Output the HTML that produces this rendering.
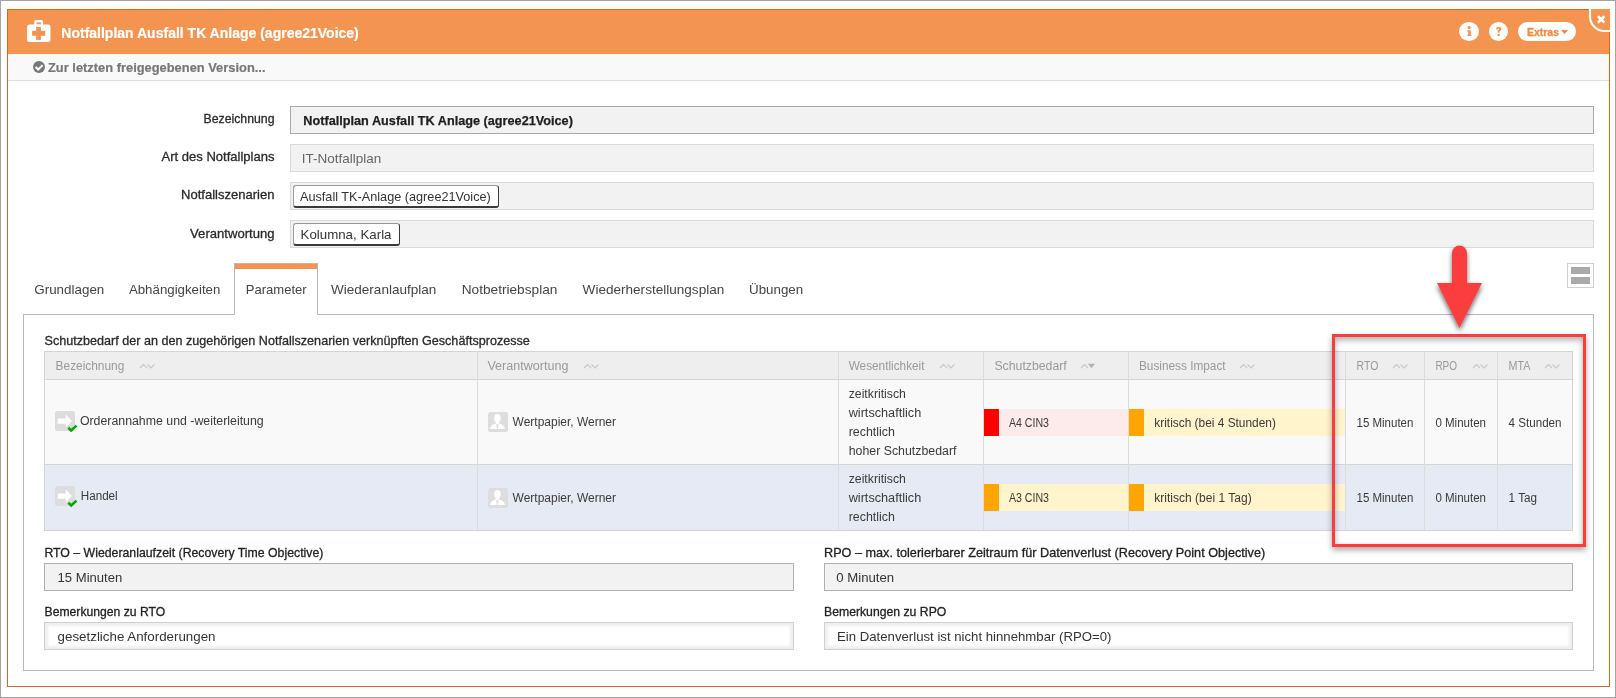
<!DOCTYPE html>
<html><head><meta charset="utf-8"><style>
html,body{margin:0;padding:0;width:1616px;height:698px;overflow:hidden;background:#fff}
body{position:relative;font-family:"Liberation Sans",sans-serif}
div{position:absolute}
svg text{font-family:"Liberation Sans",sans-serif}
</style></head><body>
<div style="left:0px;top:0px;width:1616px;height:698px;border:1px solid #a4a4a4;box-sizing:border-box;background:#fff"></div>
<div style="left:7px;top:9px;width:1603px;height:678px;border:1px solid #d9691a;box-sizing:border-box;background:#fff"></div>
<div style="left:7px;top:9px;width:1603px;height:45px;background:#f39550;border:1px solid #d9691a;border-bottom:none;box-sizing:border-box"></div>
<div style="left:8px;top:54px;width:1601px;height:26px;background:#f9f9f9;border-bottom:1px solid #dedede"></div>
<svg style="position:absolute;left:22px;top:16px" width="34" height="30" viewBox="0 0 34 30">
<rect x="12.25" y="4.1" width="8.8" height="6" rx="1.6" fill="#fff"/>
<rect x="14.6" y="6.4" width="4.3" height="2.1" fill="#f39550"/>
<rect x="5.07" y="8.6" width="23.4" height="17.4" rx="2.5" fill="#fff"/>
<rect x="14.2" y="11" width="4.7" height="12.9" fill="#f39550"/>
<rect x="10.1" y="14.8" width="13.1" height="5" fill="#f39550"/>
</svg>
<div style="left:1459px;top:22px;width:20px;height:19.3px;background:#fff;border-radius:50%"></div>
<div style="left:1489px;top:22px;width:19px;height:19.3px;background:#fff;border-radius:50%"></div>
<svg style="position:absolute;left:1459px;top:22px" width="20" height="20" viewBox="0 0 20 20">
<circle cx="10.1" cy="5.6" r="1.6" fill="#f39550"/>
<path d="M8.1 8.3 H11.8 V12.6 L12.8 13.9 H8 L9.1 12.6 V9.6 L8.1 9.6 Z" fill="#f39550"/>
</svg>
<svg style="position:absolute;left:1489px;top:22px" width="20" height="20" viewBox="0 0 20 20">
<path d="M7 7.2 C7.2 5.6 8.3 4.8 9.7 4.8 C11.3 4.8 12.4 5.7 12.4 7.1 C12.4 8.5 11.3 9 10.6 9.6 V10.8 H8.7 V9.2 C8.7 8.3 10.3 7.9 10.3 7.1 C10.3 6.7 10 6.5 9.6 6.5 C9.1 6.5 8.8 6.9 8.7 7.5 Z" fill="#f39550"/>
<rect x="8.5" y="12" width="2.3" height="2.1" fill="#f39550"/>
</svg>
<div style="left:1518px;top:22px;width:58px;height:19px;background:#fff;border-radius:10px"></div>
<svg style="position:absolute;left:1560px;top:29px" width="9" height="6" viewBox="0 0 9 6"><path d="M1 1 H8 L4.5 5 Z" fill="#f08a40"/></svg>
<svg style="position:absolute;left:1580px;top:0px" width="36" height="40" viewBox="1580 0 36 40">
<rect x="1610" y="1" width="5" height="39" fill="#fff"/>
<rect x="1580" y="1" width="35" height="8" fill="#fff"/>
<rect x="1589" y="9" width="21" height="24" fill="#f39550"/>
<path d="M1590 8 V16.5 A14.5 14.5 0 0 0 1604.5 31 H1611" stroke="#fff" stroke-width="2.1" fill="none"/>
<path d="M1598 16.2 L1604.4 22.6 M1604.4 16.2 L1598 22.6" stroke="#fff" stroke-width="2.7"/>
<rect x="1609" y="32" width="1" height="8" fill="#d9691a"/>
</svg>
<svg style="position:absolute;left:33px;top:61px" width="12" height="12" viewBox="0 0 12 12">
<circle cx="6" cy="6" r="6" fill="#777"/>
<path d="M2.5 5.9 L5.2 8.5 L9.6 4.3" stroke="#fff" stroke-width="2.1" fill="none"/>
</svg>
<div style="left:290px;top:106px;width:1304px;height:28px;background:#f2f2f2;border:1px solid #a9a9a9;box-sizing:border-box"></div>
<div style="left:290px;top:144px;width:1304px;height:28px;background:#f2f2f2;border:1px solid #d9d9d9;box-sizing:border-box"></div>
<div style="left:290px;top:182px;width:1304px;height:28px;background:#f2f2f2;border:1px solid #d9d9d9;box-sizing:border-box"></div>
<div style="left:293px;top:185px;width:206px;height:23px;background:#fff;border:1px solid #999;border-right-color:#3a3a3a;border-bottom:2px solid #3a3a3a;border-radius:3px;box-sizing:border-box"></div>
<div style="left:290px;top:220px;width:1304px;height:28px;background:#f2f2f2;border:1px solid #d9d9d9;box-sizing:border-box"></div>
<div style="left:293px;top:223px;width:107px;height:23px;background:#fff;border:1px solid #999;border-right-color:#3a3a3a;border-bottom:2px solid #3a3a3a;border-radius:3px;box-sizing:border-box"></div>
<div style="left:23px;top:314px;width:1571px;height:357px;border:1px solid #b9b9b9;box-sizing:border-box;background:#fff"></div>
<div style="left:234px;top:263px;width:84px;height:52px;border:1px solid #b9b9b9;border-bottom:none;background:#fff;box-sizing:border-box"></div>
<div style="left:235px;top:264px;width:82px;height:5px;background:#f39550"></div>
<div style="left:1567px;top:263px;width:27px;height:25px;border:1px solid #cfcfcf;box-sizing:border-box;background:#fff"></div>
<div style="left:1571px;top:267px;width:19px;height:7px;background:#aaa"></div>
<div style="left:1571px;top:277px;width:19px;height:7px;background:#aaa"></div>
<div style="left:44px;top:351px;width:1529px;height:180px;border:1px solid #d4d4d4;box-sizing:border-box;background:#f9f9f9"></div>
<div style="left:45px;top:352px;width:1527px;height:27px;background:#eeeeee;border-bottom:1px solid #d4d4d4"></div>
<div style="left:45px;top:464px;width:1527px;height:66px;background:#e6eaf5;border-top:1px solid #d4d4d4;box-sizing:border-box"></div>
<div style="left:477px;top:352px;width:1px;height:178px;background:#dcdcdc"></div>
<div style="left:838px;top:352px;width:1px;height:178px;background:#dcdcdc"></div>
<div style="left:983px;top:352px;width:1px;height:178px;background:#dcdcdc"></div>
<div style="left:1128px;top:352px;width:1px;height:178px;background:#dcdcdc"></div>
<div style="left:1345px;top:352px;width:1px;height:178px;background:#dcdcdc"></div>
<div style="left:1424px;top:352px;width:1px;height:178px;background:#dcdcdc"></div>
<div style="left:1497px;top:352px;width:1px;height:178px;background:#dcdcdc"></div>
<svg style="position:absolute;left:138.8px;top:363px" width="17" height="7" viewBox="0 0 17 7"><path d="M1 5 L4.5 1.5 L8 5" stroke="#c8c8c8" stroke-width="1.1" fill="none"/><path d="M8.5 1.5 L12 5 L15.5 1.5" stroke="#c8c8c8" stroke-width="1.1" fill="none"/></svg>
<svg style="position:absolute;left:582.7px;top:363px" width="17" height="7" viewBox="0 0 17 7"><path d="M1 5 L4.5 1.5 L8 5" stroke="#c8c8c8" stroke-width="1.1" fill="none"/><path d="M8.5 1.5 L12 5 L15.5 1.5" stroke="#c8c8c8" stroke-width="1.1" fill="none"/></svg>
<svg style="position:absolute;left:938.5px;top:363px" width="17" height="7" viewBox="0 0 17 7"><path d="M1 5 L4.5 1.5 L8 5" stroke="#c8c8c8" stroke-width="1.1" fill="none"/><path d="M8.5 1.5 L12 5 L15.5 1.5" stroke="#c8c8c8" stroke-width="1.1" fill="none"/></svg>
<svg style="position:absolute;left:1080px;top:363px" width="17" height="7" viewBox="0 0 17 7"><path d="M1 5 L4.5 1.5 L8 5" stroke="#c8c8c8" stroke-width="1.1" fill="none"/><path d="M7.8 0.8 H15.2 L11.5 5.3 Z" fill="#b5b5b5"/></svg>
<svg style="position:absolute;left:1239px;top:363px" width="17" height="7" viewBox="0 0 17 7"><path d="M1 5 L4.5 1.5 L8 5" stroke="#c8c8c8" stroke-width="1.1" fill="none"/><path d="M8.5 1.5 L12 5 L15.5 1.5" stroke="#c8c8c8" stroke-width="1.1" fill="none"/></svg>
<svg style="position:absolute;left:1392px;top:363px" width="17" height="7" viewBox="0 0 17 7"><path d="M1 5 L4.5 1.5 L8 5" stroke="#c8c8c8" stroke-width="1.1" fill="none"/><path d="M8.5 1.5 L12 5 L15.5 1.5" stroke="#c8c8c8" stroke-width="1.1" fill="none"/></svg>
<svg style="position:absolute;left:1471.6px;top:363px" width="17" height="7" viewBox="0 0 17 7"><path d="M1 5 L4.5 1.5 L8 5" stroke="#c8c8c8" stroke-width="1.1" fill="none"/><path d="M8.5 1.5 L12 5 L15.5 1.5" stroke="#c8c8c8" stroke-width="1.1" fill="none"/></svg>
<svg style="position:absolute;left:1544.2px;top:363px" width="17" height="7" viewBox="0 0 17 7"><path d="M1 5 L4.5 1.5 L8 5" stroke="#c8c8c8" stroke-width="1.1" fill="none"/><path d="M8.5 1.5 L12 5 L15.5 1.5" stroke="#c8c8c8" stroke-width="1.1" fill="none"/></svg>
<svg style="position:absolute;left:55px;top:411px" width="24" height="24" viewBox="0 0 24 24">
<rect x="0" y="0" width="20" height="20" rx="2.5" fill="#ddd"/>
<path d="M2.8 7.5 H10.8 V3.4 L17 10 L10.8 16.5 V12.8 H2.8 Z" fill="#fff"/>
<path d="M13.3 16.7 L16.2 19.4 L21.5 14.6" stroke="#0a0" stroke-width="2.6" fill="none"/>
</svg>
<svg style="position:absolute;left:488px;top:412px" width="20" height="20" viewBox="0 0 20 20">
<rect x="0" y="0" width="20" height="20" rx="2.5" fill="#ddd"/>
<ellipse cx="9.4" cy="6.2" rx="3.3" ry="4.2" fill="#fff"/>
<path d="M7.9 9 H10.9 V11.6 L9.4 12.4 L7.9 11.6 Z" fill="#fff"/>
<path d="M1.9 17 C2.2 14 4.4 12.5 8 11.3 L9 17 Z" fill="#fff"/>
<path d="M9.8 17 L10.8 11.3 C14.4 12.5 16.6 14 16.9 17 Z" fill="#fff"/>
</svg>
<div style="left:984px;top:409px;width:15px;height:27px;background:#f00"></div>
<div style="left:999px;top:409px;width:129px;height:27px;background:#fdeaea"></div>
<div style="left:1129px;top:409px;width:15px;height:27px;background:#ffa500"></div>
<div style="left:1144px;top:409px;width:201px;height:27px;background:#fff4cc"></div>
<svg style="position:absolute;left:55px;top:486px" width="24" height="24" viewBox="0 0 24 24">
<rect x="0" y="0" width="20" height="20" rx="2.5" fill="#ddd"/>
<path d="M2.8 7.5 H10.8 V3.4 L17 10 L10.8 16.5 V12.8 H2.8 Z" fill="#fff"/>
<path d="M13.3 16.7 L16.2 19.4 L21.5 14.6" stroke="#0a0" stroke-width="2.6" fill="none"/>
</svg>
<svg style="position:absolute;left:488px;top:488px" width="20" height="20" viewBox="0 0 20 20">
<rect x="0" y="0" width="20" height="20" rx="2.5" fill="#ddd"/>
<ellipse cx="9.4" cy="6.2" rx="3.3" ry="4.2" fill="#fff"/>
<path d="M7.9 9 H10.9 V11.6 L9.4 12.4 L7.9 11.6 Z" fill="#fff"/>
<path d="M1.9 17 C2.2 14 4.4 12.5 8 11.3 L9 17 Z" fill="#fff"/>
<path d="M9.8 17 L10.8 11.3 C14.4 12.5 16.6 14 16.9 17 Z" fill="#fff"/>
</svg>
<div style="left:984px;top:484px;width:15px;height:27px;background:#ffa500"></div>
<div style="left:999px;top:484px;width:129px;height:27px;background:#fff4cc"></div>
<div style="left:1129px;top:484px;width:15px;height:27px;background:#ffa500"></div>
<div style="left:1144px;top:484px;width:201px;height:27px;background:#fff4cc"></div>
<div style="left:44px;top:563px;width:750px;height:28px;background:#f2f2f2;border:1px solid #b0b0b0;box-sizing:border-box"></div>
<div style="left:44px;top:622px;width:750px;height:28px;background:#fff;border:1px solid #cfcfcf;box-shadow:inset 0 0 3px 3px #efefef;box-sizing:border-box"></div>
<div style="left:824px;top:563px;width:749px;height:28px;background:#f2f2f2;border:1px solid #b0b0b0;box-sizing:border-box"></div>
<div style="left:824px;top:622px;width:749px;height:28px;background:#fff;border:1px solid #cfcfcf;box-shadow:inset 0 0 3px 3px #efefef;box-sizing:border-box"></div>
<svg style="position:absolute;left:0;top:0;will-change:transform" width="1616" height="698">
<text x="61.30" y="38.00" font-size="14.8" fill="#fff" font-weight="bold" textLength="297.50" lengthAdjust="spacingAndGlyphs" stroke="#fff" stroke-width="0.2">Notfallplan Ausfall TK Anlage (agree21Voice)</text>
<text x="1527.00" y="36.00" font-size="11" fill="#f08a40" font-weight="bold" textLength="32.00" lengthAdjust="spacingAndGlyphs" stroke="#f08a40" stroke-width="0.3">Extras</text>
<text x="48.00" y="72.00" font-size="13" fill="#777" font-weight="bold" textLength="217.50" lengthAdjust="spacingAndGlyphs" stroke="#777" stroke-width="0.2">Zur letzten freigegebenen Version...</text>
<text x="203.50" y="123.00" font-size="13" fill="#2a2a2a" textLength="71.00" lengthAdjust="spacingAndGlyphs" stroke="#2a2a2a" stroke-width="0.3">Bezeichnung</text>
<text x="161.50" y="161.00" font-size="13" fill="#2a2a2a" textLength="113.00" lengthAdjust="spacingAndGlyphs" stroke="#2a2a2a" stroke-width="0.3">Art des Notfallplans</text>
<text x="181.10" y="199.00" font-size="13" fill="#2a2a2a" textLength="93.40" lengthAdjust="spacingAndGlyphs" stroke="#2a2a2a" stroke-width="0.3">Notfallszenarien</text>
<text x="190.10" y="237.50" font-size="13" fill="#2a2a2a" textLength="84.40" lengthAdjust="spacingAndGlyphs" stroke="#2a2a2a" stroke-width="0.3">Verantwortung</text>
<text x="303.30" y="125.40" font-size="13.3" fill="#1e1e1e" font-weight="bold" textLength="269.60" lengthAdjust="spacingAndGlyphs" stroke="#1e1e1e" stroke-width="0.25">Notfallplan Ausfall TK Anlage (agree21Voice)</text>
<text x="301.80" y="163.00" font-size="13.5" fill="#666" textLength="79.50" lengthAdjust="spacingAndGlyphs">IT-Notfallplan</text>
<text x="300.00" y="201.00" font-size="13" fill="#333" textLength="190.80" lengthAdjust="spacingAndGlyphs">Ausfall TK-Anlage (agree21Voice)</text>
<text x="300.50" y="239.00" font-size="13" fill="#333" textLength="91.00" lengthAdjust="spacingAndGlyphs">Kolumna, Karla</text>
<text x="34.30" y="294.00" font-size="13.6" fill="#444" textLength="70.00" lengthAdjust="spacingAndGlyphs">Grundlagen</text>
<text x="128.90" y="294.00" font-size="13.6" fill="#444" textLength="91.50" lengthAdjust="spacingAndGlyphs">Abhängigkeiten</text>
<text x="245.70" y="294.00" font-size="13.6" fill="#444" textLength="61.00" lengthAdjust="spacingAndGlyphs">Parameter</text>
<text x="331.00" y="294.00" font-size="13.6" fill="#444" textLength="105.30" lengthAdjust="spacingAndGlyphs">Wiederanlaufplan</text>
<text x="461.70" y="294.00" font-size="13.6" fill="#444" textLength="95.70" lengthAdjust="spacingAndGlyphs">Notbetriebsplan</text>
<text x="582.60" y="294.00" font-size="13.6" fill="#444" textLength="141.70" lengthAdjust="spacingAndGlyphs">Wiederherstellungsplan</text>
<text x="749.00" y="294.00" font-size="13.6" fill="#444" textLength="54.20" lengthAdjust="spacingAndGlyphs">Übungen</text>
<text x="44.50" y="345.00" font-size="12.8" fill="#2a2a2a" textLength="485.30" lengthAdjust="spacingAndGlyphs" stroke="#2a2a2a" stroke-width="0.3">Schutzbedarf der an den zugehörigen Notfallszenarien verknüpften Geschäftsprozesse</text>
<text x="55.60" y="370.00" font-size="12.5" fill="#999" textLength="68.70" lengthAdjust="spacingAndGlyphs">Bezeichnung</text>
<text x="487.40" y="370.00" font-size="12.5" fill="#999" textLength="81.00" lengthAdjust="spacingAndGlyphs">Verantwortung</text>
<text x="848.70" y="370.00" font-size="12.5" fill="#999" textLength="75.80" lengthAdjust="spacingAndGlyphs">Wesentlichkeit</text>
<text x="994.40" y="370.00" font-size="12.5" fill="#999" textLength="72.40" lengthAdjust="spacingAndGlyphs">Schutzbedarf</text>
<text x="1139.00" y="370.00" font-size="12.5" fill="#999" textLength="86.60" lengthAdjust="spacingAndGlyphs">Business Impact</text>
<text x="1356.50" y="370.00" font-size="12.5" fill="#999" textLength="21.80" lengthAdjust="spacingAndGlyphs">RTO</text>
<text x="1435.40" y="370.00" font-size="12.5" fill="#999" textLength="21.70" lengthAdjust="spacingAndGlyphs">RPO</text>
<text x="1508.60" y="370.00" font-size="12.5" fill="#999" textLength="21.80" lengthAdjust="spacingAndGlyphs">MTA</text>
<text x="79.90" y="425.00" font-size="12.5" fill="#3a3a3a" textLength="183.80" lengthAdjust="spacingAndGlyphs">Orderannahme und -weiterleitung</text>
<text x="512.60" y="426.00" font-size="12.5" fill="#3a3a3a" textLength="103.40" lengthAdjust="spacingAndGlyphs">Wertpapier, Werner</text>
<text x="848.70" y="398.00" font-size="12.5" fill="#3a3a3a" textLength="57.20" lengthAdjust="spacingAndGlyphs">zeitkritisch</text>
<text x="848.70" y="417.00" font-size="12.5" fill="#3a3a3a" textLength="72.50" lengthAdjust="spacingAndGlyphs">wirtschaftlich</text>
<text x="848.70" y="435.50" font-size="12.5" fill="#3a3a3a" textLength="46.20" lengthAdjust="spacingAndGlyphs">rechtlich</text>
<text x="848.70" y="454.50" font-size="12.5" fill="#3a3a3a" textLength="107.80" lengthAdjust="spacingAndGlyphs">hoher Schutzbedarf</text>
<text x="1008.90" y="427.30" font-size="12.5" fill="#3a3a3a" textLength="40.10" lengthAdjust="spacingAndGlyphs">A4 CIN3</text>
<text x="1154.30" y="427.30" font-size="12.5" fill="#3a3a3a" textLength="121.60" lengthAdjust="spacingAndGlyphs">kritisch (bei 4 Stunden)</text>
<text x="1356.50" y="427.20" font-size="12.5" fill="#3a3a3a" textLength="56.90" lengthAdjust="spacingAndGlyphs">15 Minuten</text>
<text x="1435.40" y="427.20" font-size="12.5" fill="#3a3a3a" textLength="50.60" lengthAdjust="spacingAndGlyphs">0 Minuten</text>
<text x="1508.60" y="427.20" font-size="12.5" fill="#3a3a3a" textLength="52.90" lengthAdjust="spacingAndGlyphs">4 Stunden</text>
<text x="80.80" y="500.00" font-size="12.5" fill="#3a3a3a" textLength="36.90" lengthAdjust="spacingAndGlyphs">Handel</text>
<text x="512.60" y="502.00" font-size="12.5" fill="#3a3a3a" textLength="103.40" lengthAdjust="spacingAndGlyphs">Wertpapier, Werner</text>
<text x="848.70" y="483.00" font-size="12.5" fill="#3a3a3a" textLength="57.20" lengthAdjust="spacingAndGlyphs">zeitkritisch</text>
<text x="848.70" y="502.00" font-size="12.5" fill="#3a3a3a" textLength="72.50" lengthAdjust="spacingAndGlyphs">wirtschaftlich</text>
<text x="848.70" y="521.00" font-size="12.5" fill="#3a3a3a" textLength="46.20" lengthAdjust="spacingAndGlyphs">rechtlich</text>
<text x="1008.90" y="502.00" font-size="12.5" fill="#3a3a3a" textLength="40.10" lengthAdjust="spacingAndGlyphs">A3 CIN3</text>
<text x="1154.30" y="502.00" font-size="12.5" fill="#3a3a3a" textLength="97.40" lengthAdjust="spacingAndGlyphs">kritisch (bei 1 Tag)</text>
<text x="1356.50" y="502.00" font-size="12.5" fill="#3a3a3a" textLength="56.90" lengthAdjust="spacingAndGlyphs">15 Minuten</text>
<text x="1435.40" y="502.00" font-size="12.5" fill="#3a3a3a" textLength="50.60" lengthAdjust="spacingAndGlyphs">0 Minuten</text>
<text x="1508.60" y="502.00" font-size="12.5" fill="#3a3a3a" textLength="28.40" lengthAdjust="spacingAndGlyphs">1 Tag</text>
<text x="44.40" y="557.30" font-size="12.8" fill="#222" textLength="279.00" lengthAdjust="spacingAndGlyphs" stroke="#222" stroke-width="0.3">RTO – Wiederanlaufzeit (Recovery Time Objective)</text>
<text x="57.60" y="582.00" font-size="13.5" fill="#333" textLength="64.70" lengthAdjust="spacingAndGlyphs">15 Minuten</text>
<text x="44.60" y="615.70" font-size="12.8" fill="#222" textLength="120.60" lengthAdjust="spacingAndGlyphs" stroke="#222" stroke-width="0.3">Bemerkungen zu RTO</text>
<text x="57.60" y="640.50" font-size="13.5" fill="#333" textLength="157.90" lengthAdjust="spacingAndGlyphs">gesetzliche Anforderungen</text>
<text x="824.00" y="556.70" font-size="12.8" fill="#222" textLength="441.20" lengthAdjust="spacingAndGlyphs" stroke="#222" stroke-width="0.3">RPO – max. tolerierbarer Zeitraum für Datenverlust (Recovery Point Objective)</text>
<text x="836.30" y="582.00" font-size="13.5" fill="#333" textLength="57.90" lengthAdjust="spacingAndGlyphs">0 Minuten</text>
<text x="824.00" y="615.60" font-size="12.8" fill="#222" textLength="122.30" lengthAdjust="spacingAndGlyphs" stroke="#222" stroke-width="0.3">Bemerkungen zu RPO</text>
<text x="837.00" y="640.70" font-size="13.5" fill="#333" textLength="274.40" lengthAdjust="spacingAndGlyphs">Ein Datenverlust ist nicht hinnehmbar (RPO=0)</text>
</svg>
<div style="left:1332px;top:334px;width:254px;height:213px;border:3px solid #fa3c3c;box-sizing:border-box;box-shadow:0 3px 6px rgba(0,0,0,0.35), inset 0 3px 6px rgba(0,0,0,0.32)"></div>
<svg style="position:absolute;left:1425px;top:238px" width="70" height="100" viewBox="0 0 70 100">
<defs><filter id="sh" x="-40%" y="-40%" width="180%" height="180%"><feGaussianBlur in="SourceAlpha" stdDeviation="2.8"/><feOffset dx="0" dy="2.5"/><feComponentTransfer><feFuncA type="linear" slope="0.6"/></feComponentTransfer><feMerge><feMergeNode/><feMergeNode in="SourceGraphic"/></feMerge></filter></defs>
<g filter="url(#sh)"><path d="M27 15 A7.5 7.5 0 0 1 42 15 V45 H57 L34.5 90 L12 45 H27 Z" fill="#fa3c3c"/></g>
</svg>
</body></html>
